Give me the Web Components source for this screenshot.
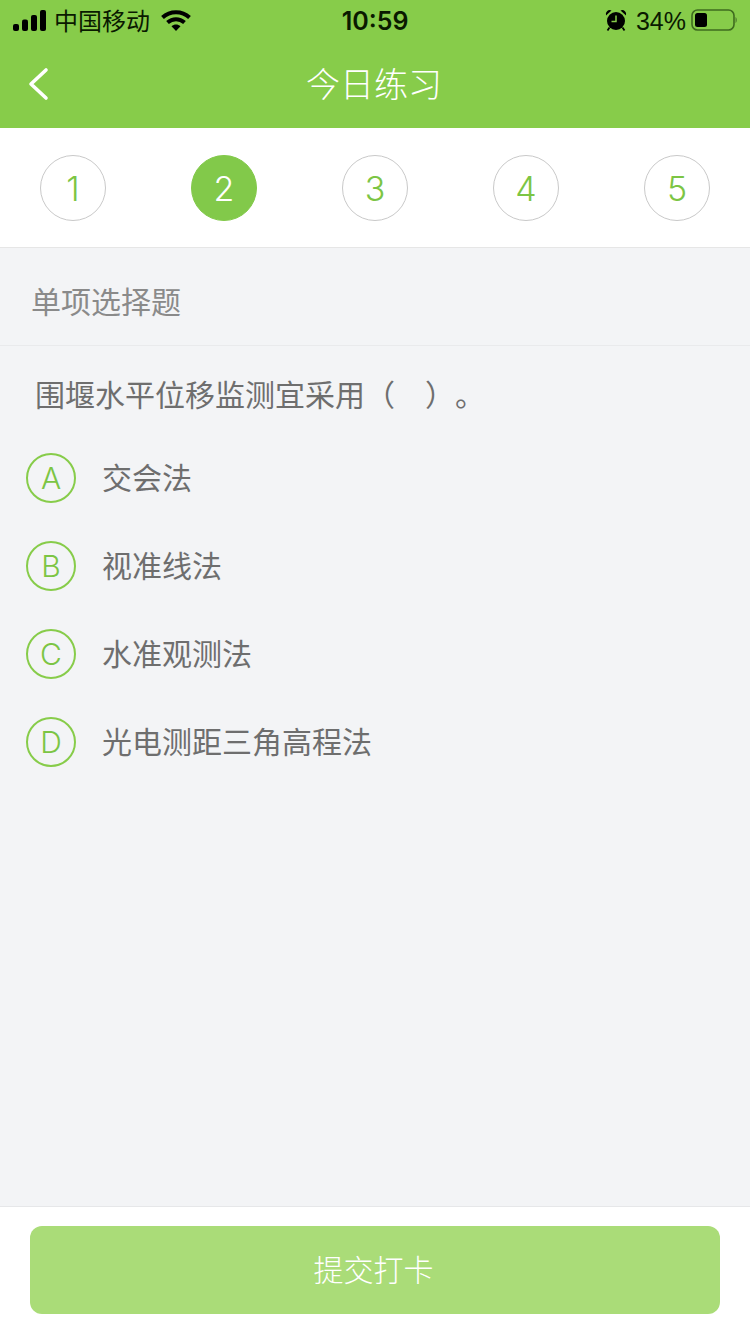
<!DOCTYPE html>
<html>
<head>
<meta charset="utf-8">
<style>
  html, body { margin: 0; padding: 0; }
  body { width: 750px; height: 1334px; overflow: hidden; font-family: "Liberation Sans", "Noto Sans CJK SC", sans-serif; }
</style>
</head>
<body>
<practice-page>
  <status-bar slot="top"></status-bar>
  <nav-bar slot="top">今日练习</nav-bar>
  <step-list slot="top"></step-list>
  <section-title>单项选择题</section-title>
  <question-text>围堰水平位移监测宜采用（&nbsp;&nbsp;&nbsp;<span style="margin-left:5px">）</span><span style="margin-left:15px">。</span></question-text>
  <option-item letter="A">交会法</option-item>
  <option-item letter="B">视准线法</option-item>
  <option-item letter="C">水准观测法</option-item>
  <option-item letter="D">光电测距三角高程法</option-item>
  <submit-bar slot="bottom">提交打卡</submit-bar>
</practice-page>

<script>
class PracticePage extends HTMLElement {
  constructor() {
    super();
    this.attachShadow({ mode: 'open' }).innerHTML = `
      <style>
        :host { display: flex; flex-direction: column; height: 1334px; background: #f3f4f6; }
        .body { flex: 1; display: flex; flex-direction: column; }
      </style>
      <slot name="top"></slot>
      <div class="body"><slot></slot></div>
      <slot name="bottom"></slot>
    `;
  }
}

class StatusBar extends HTMLElement {
  constructor() {
    super();
    this.attachShadow({ mode: 'open' }).innerHTML = `
      <style>
        :host { display: grid; grid-template-columns: 1fr auto 1fr; align-items: center; height: 40px; background: #87cc4a; color: #0a1a00; padding: 0 13px; box-sizing: border-box; }
        .side { display: flex; align-items: center; }
        .right { justify-content: flex-end; }
        .carrier { font-size: 24px; margin-left: 8px; margin-right: 11px; line-height: 44px; height: 40px; }
        .time { font-family: Inter, "Liberation Sans", sans-serif; font-size: 25px; font-weight: 600; line-height: 42px; height: 40px; }
        .pct { font-family: "Liberation Sans", sans-serif; font-size: 25px; margin: 0 5px 0 9px; line-height: 42px; height: 40px; }
        svg { display: block; }
        .wifi { margin-top: 1px; }
      </style>
      <div class="side">
        <svg width="33" height="21" viewBox="0 0 33 21">
          <rect x="0" y="14" width="6" height="7" rx="2" fill="#000"/>
          <rect x="9" y="9.500" width="6" height="11.500" rx="2" fill="#000"/>
          <rect x="18" y="5" width="6" height="16" rx="2" fill="#000"/>
          <rect x="27" y="0" width="6" height="21" rx="2" fill="#000"/>
        </svg>
        <span class="carrier">中国移动</span>
        <svg class="wifi" width="30" height="22" viewBox="0 0 30 22">
          <path d="M1.500 7.500C9 .5 21 .5 28.500 7.500" fill="none" stroke="#000" stroke-width="4"/>
          <path d="M6.500 12.500C11.500 8 18.500 8 23.500 12.500" fill="none" stroke="#000" stroke-width="4"/>
          <path d="M10.500 16.200C13.200 14 16.800 14 19.500 16.200L15 21Z" fill="#000"/>
        </svg>
      </div>
      <div class="time">10:59</div>
      <div class="side right">
        <svg width="22" height="22" viewBox="0 0 22 22">
          <circle cx="11" cy="12" r="9" fill="#000"/>
          <path d="M11 6.500v6H6.500" fill="none" stroke="#87cc4a" stroke-width="1.500"/>
          <path d="M1 6.500A4 4 0 0 1 6.500 1.500ZM21 6.500A4 4 0 0 0 15.500 1.500Z" fill="#000"/>
          <path d="M4.500 18.500L2.500 21.500M17.500 18.500L19.500 21.500" stroke="#000" stroke-width="1.800"/>
        </svg>
        <span class="pct">34%</span>
        <svg width="46" height="22" viewBox="0 0 46 22">
          <rect x="1" y="1" width="42" height="20" rx="5.500" fill="none" stroke="#3f6b1f" stroke-width="1.600"/>
          <rect x="4" y="4" width="12" height="14" rx="2.500" fill="#000"/>
          <path d="M44.500 8c.9.6 1.300 1.700 1.300 3s-.4 2.400-1.300 3Z" fill="#4f7d2c"/>
        </svg>
      </div>
    `;
  }
}

class NavBar extends HTMLElement {
  constructor() {
    super();
    this.attachShadow({ mode: 'open' }).innerHTML = `
      <style>
        :host { display: flex; justify-content: center; position: relative; height: 88px; background: #87cc4a; color: #fff; font-size: 34px; font-weight: 300; line-height: 90px; padding-right: 2px; box-sizing: border-box; }
        .back { position: absolute; left: 27px; top: 27px; }
      </style>
      <svg class="back" width="22" height="34" viewBox="0 0 22 34">
        <path d="M19 3L4 17l15 14" fill="none" stroke="#fff" stroke-width="3.600" stroke-linecap="round" stroke-linejoin="round"/>
      </svg>
      <slot></slot>
    `;
  }
}

class StepList extends HTMLElement {
  constructor() {
    super();
    const steps = [1, 2, 3, 4, 5].map(n =>
      `<div class="step ${n === 2 ? 'active' : ''}">${n}</div>`).join('');
    this.attachShadow({ mode: 'open' }).innerHTML = `
      <style>
        :host { display: flex; justify-content: space-between; padding: 27px 40px 26px; background: #fff; border-bottom: 1px solid #e6e6e6; }
        .step { width: 66px; height: 66px; box-sizing: border-box; border-radius: 50%; border: 1px solid #c9c9c9; display: flex; align-items: center; justify-content: center; color: #7cc544; font-family: Inter, sans-serif; font-weight: 300; font-size: 34px; }
        .active { background: #82c94a; border-color: #82c94a; color: #fff; }
      </style>
      ${steps}
    `;
  }
}

class SectionTitle extends HTMLElement {
  constructor() {
    super();
    this.attachShadow({ mode: 'open' }).innerHTML = `
      <style>
        :host { display: block; height: 98px; box-sizing: border-box; padding-left: 31px; line-height: 110px; border-bottom: 1px solid #e9eaec; color: #8a8a8a; font-size: 30px; }
      </style>
      <slot></slot>
    `;
  }
}

class QuestionText extends HTMLElement {
  constructor() {
    super();
    this.attachShadow({ mode: 'open' }).innerHTML = `
      <style>
        :host { display: block; padding: 28px 0 0 35px; height: 88px; box-sizing: border-box; line-height: 44px; color: #6e6e6e; font-size: 30px; }
      </style>
      <slot></slot>
    `;
  }
}

class OptionItem extends HTMLElement {
  constructor() {
    super();
    this.attachShadow({ mode: 'open' }).innerHTML = `
      <style>
        :host { display: flex; align-items: center; gap: 26px; height: 88px; padding-left: 26px; color: #6e6e6e; font-size: 30px; }
        .letter { width: 50px; height: 50px; box-sizing: border-box; border: 2px solid #87cc4a; border-radius: 50%; display: flex; align-items: center; justify-content: center; color: #7cc544; font-family: Inter, sans-serif; font-weight: 300; font-size: 30px; }
        .label { position: relative; top: -2px; }
      </style>
      <div class="letter">${this.getAttribute('letter')}</div>
      <div class="label"><slot></slot></div>
    `;
  }
}

class SubmitBar extends HTMLElement {
  constructor() {
    super();
    this.attachShadow({ mode: 'open' }).innerHTML = `
      <style>
        :host { display: block; padding: 19px 30px 20px; background: #fff; border-top: 1px solid #e6e7e9; }
        .btn { height: 88px; line-height: 90px; padding-right: 3px; box-sizing: border-box; text-align: center; border-radius: 12px; background: #aadc78; color: #fff; font-size: 30px; font-weight: 300; }
      </style>
      <div class="btn"><slot></slot></div>
    `;
  }
}

customElements.define('practice-page', PracticePage);
customElements.define('status-bar', StatusBar);
customElements.define('nav-bar', NavBar);
customElements.define('step-list', StepList);
customElements.define('section-title', SectionTitle);
customElements.define('question-text', QuestionText);
customElements.define('option-item', OptionItem);
customElements.define('submit-bar', SubmitBar);
</script>
</body>
</html>
